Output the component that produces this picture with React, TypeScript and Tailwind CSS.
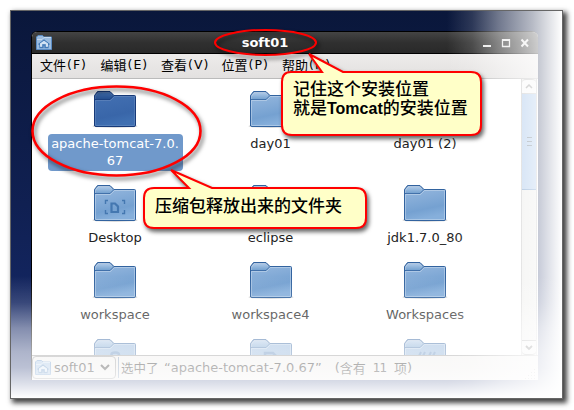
import React from "react";

type Emblem = "none" | "desktop" | "home" | "page" | "quote";

function Folder({ selected = false, emblem = "none" }: { selected?: boolean; emblem?: Emblem }) {
  const id = selected ? "dark" : "light";
  const edge = selected ? "#173a79" : "#32639f";
  return (
    <svg width="46" height="38" viewBox="0 0 46 38" className="block shrink-0">
      <defs>
        <linearGradient id={`body-${id}`} x1="0" y1="0" x2="0.25" y2="1">
          <stop offset="0" stopColor={selected ? "#4572b4" : "#9bbbe0"} />
          <stop offset="0.75" stopColor={selected ? "#3966a9" : "#75a1d1"} />
          <stop offset="1" stopColor={selected ? "#4070b2" : "#86afdb"} />
        </linearGradient>
        <linearGradient id={`tab-${id}`} x1="0" y1="0" x2="0" y2="1">
          <stop offset="0" stopColor={selected ? "#416ca9" : "#b4cdea"} />
          <stop offset="1" stopColor={selected ? "#234c8c" : "#719fce"} />
        </linearGradient>
      </defs>
      <ellipse cx="23" cy="35.2" rx="22.5" ry="1.6" fill="#000" opacity="0.2" />
      <path d="M2.5 35V4.5L5.5 .5H18L22 4.5H42.5Q43.5 4.5 43.5 5.5V34Q43.5 35.5 42 35.5H4Q2.5 35.5 2.5 34Z" fill={`url(#body-${id})`} stroke={edge} />
      <path d="M3 8.5V4.5L6 1H17.5L21.5 5L18 8.5Z" fill={`url(#tab-${id})`} stroke={edge} strokeWidth=".8" />
      <path d="M3.5 34.5V9.5H18.5L22.5 5.5H42.5V34.5Z" fill="none" stroke="#fff" opacity={selected ? 0.12 : 0.3} />
      <path d="M3.5 8V5L6 1.5H17.5L20.5 4.5" fill="none" stroke="#fff" opacity={selected ? 0.15 : 0.4} />
      {emblem === "desktop" && (
        <g fill="none" stroke="#4477b0" strokeWidth="1.8">
          <path d="M19.5 18.5H23L26 21.5V27H19.5Z" strokeWidth="2.2" />
          <path d="M13.5 19V15.5H16M30 15.5H32.5V19M13.5 25V28.5H16M30 28.5H32.5V25" strokeWidth="1.4" />
        </g>
      )}
      {emblem === "home" && <path d="M19.5 18V15.5Q19.5 13.5 23.5 13.5Q27 13.5 27 16" fill="none" stroke="#4c7cb5" strokeWidth="2.5" />}
      {emblem === "page" && <path d="M17 18V14H25L28 17V18" fill="none" stroke="#4c7cb5" strokeWidth="2.5" />}
      {emblem === "quote" && <path d="M19 13L17 17M23 13L21 17M29 13L27 17M33 13L31 17" fill="none" stroke="#4c7cb5" strokeWidth="2" />}
    </svg>
  );
}

function HomeFolder() {
  return (
    <svg width="16" height="15" viewBox="0 0 16 15" className="block shrink-0">
      <path d="M.5 14V2L2 .5H6.5L8 2H15.5V14.5H.5Z" fill="#9bbce0" stroke="#5b8cc4" />
      <path d="M1 4.5H6L8 2.5H15" fill="none" stroke="#c4d9ef" />
      <path d="M2.5 9.5L8 5L13.5 9.5M4 9V12.5H7V10H9V12.5H12V9" fill="none" stroke="#457bb7" strokeWidth="1.3" />
      <path d="M4 8.5L8 5.7L12 8.5V11.8H10V9H6V11.8H4Z" fill="#d2e2f3" />
    </svg>
  );
}

function Item({ name, emblem }: { name: string; emblem?: Emblem }) {
  return (
    <div className="flex flex-col items-center">
      <Folder emblem={emblem} />
      <span className="mt-[6px] whitespace-nowrap text-[13px] leading-[17px] text-[#222]">{name}</span>
    </div>
  );
}

function ClippedFolder({ emblem }: { emblem: Emblem }) {
  return (
    <div className="flex justify-center">
      <Folder emblem={emblem} />
    </div>
  );
}

const menus = [["文件", "F"], ["编辑", "E"], ["查看", "V"], ["位置", "P"], ["帮助", "H"]];

export default function App() {
  return (
    <div className="relative h-[410px] w-[574px] overflow-hidden bg-white pl-[10px] pt-[10px] font-['DejaVu_Sans','Noto_Sans_CJK_SC',sans-serif]">
      <div className="relative h-[389px] w-[553px] border border-[#666] bg-gradient-to-b from-[#0a173b] via-[#102052] to-[#162b70] pl-[20px] pt-[20px] shadow-[3px_3px_5px_1px_#444]">
        <div className="flex h-[349px] w-[507px] flex-col overflow-hidden rounded-t-[6px] border-l border-t border-black bg-white">
          <header className="flex h-[22px] shrink-0 items-center justify-between border-b border-black bg-gradient-to-b from-[#444] via-[#303030] to-[#292929] pl-[4px] pr-[8px]">
            <HomeFolder />
            <span className="-ml-[4px] text-[13px] font-bold leading-[18px] text-white">soft01</span>
            <svg width="48" height="10" viewBox="0 0 48 10" fill="none" stroke="#e8e8e8">
              <path d="M1 8H9" strokeWidth="2" />
              <path d="M20.5 2H27.5V8.5H20.5Z" strokeWidth="1.3" />
              <path d="M20 2H28" strokeWidth="2" />
              <path d="M39.5 1.5L46 8.5M46 1.5L39.5 8.5" strokeWidth="2" />
            </svg>
          </header>
          <nav className="flex h-[25px] shrink-0 items-center gap-[13px] border-b border-[#bbb] bg-gradient-to-b from-[#edebea] to-[#e3e1e0] pb-[2px] pl-[8px] text-black">
            {menus.map(([name, key]) => (
              <span key={key} className="flex w-[47.5px] items-center whitespace-nowrap font-['Noto_Sans_CJK_SC',sans-serif] text-[13px] leading-[18px]">
                {name}
                <span className="ml-px font-['DejaVu_Sans',sans-serif] text-[12.5px] tracking-[1px]">({key})</span>
              </span>
            ))}
          </nav>
          <div className="flex h-[276px] shrink-0">
            <main className="grid h-[276px] w-[489px] shrink-0 grid-cols-[156px_155px_154px] grid-rows-[94px_77px_77px_40px] overflow-hidden pl-[5px] pt-[12px]">
              <div className="flex flex-col items-center">
                <Folder selected />
                <span className="mt-[5px] h-[37px] w-[135px] rounded-[4px] bg-[#7099cb] pt-px text-center text-[13px] leading-[17px] text-white">apache-tomcat-7.0.<br />67</span>
              </div>
              <Item name="day01" />
              <Item name="day01 (2)" />
              <Item name="Desktop" emblem="desktop" />
              <Item name="eclipse" />
              <Item name="jdk1.7.0_80" />
              <Item name="workspace" />
              <Item name="workspace4" />
              <Item name="Workspaces" />
              <ClippedFolder emblem="home" />
              <ClippedFolder emblem="page" />
              <ClippedFolder emblem="quote" />
            </main>
            <aside className="flex w-[16px] flex-col border-x border-[#bbb] bg-[#e8e8e5]">
              <div className="flex h-[15px] items-center justify-center rounded-t border-y border-[#bbb] bg-[#f6f6f6]">
                <svg width="8" height="5" viewBox="0 0 8 5"><path d="M1 4L4 1L7 4" fill="none" stroke="#888" strokeWidth="1.5" /></svg>
              </div>
              <div className="flex h-[96px] flex-col items-center justify-center gap-[3px] border-b border-[#5585be] bg-[#9dbfe8]">
                <i className="h-px w-[5px] bg-[#567]" /><i className="h-px w-[5px] bg-[#567]" /><i className="h-px w-[5px] bg-[#567]" />
              </div>
              <div className="mt-auto flex h-[15px] items-center justify-center rounded-b border-y border-[#777] bg-[#eee]">
                <svg width="8" height="5" viewBox="0 0 8 5"><path d="M1 1L4 4L7 1" fill="none" stroke="#000" strokeWidth="1.8" /></svg>
              </div>
            </aside>
          </div>
          <footer className="flex flex-1 items-center border-b border-t border-[#888] bg-[#edebe9] pb-px text-[13px] leading-[18px] text-black">
            <div className="flex h-[23px] w-[84px] shrink-0 items-center rounded-[4px] border border-[#888] pl-[2px]">
              <HomeFolder />
              <span className="ml-[3px] w-[42px] shrink-0">soft01</span>
              <svg width="10" height="7" viewBox="0 0 10 7" className="ml-[4px]"><path d="M1 1L5 5L9 1" fill="none" stroke="#111" strokeWidth="2" /></svg>
            </div>
            <i className="ml-[2px] h-[21px] w-px bg-[#6885aa]" />
            <span className="ml-[2px] w-[38px] font-['Noto_Sans_CJK_SC',sans-serif] text-[12.5px]">选中了</span>
            <span className="ml-[5px] whitespace-nowrap">“apache-tomcat-7.0.67”</span>
            <span className="ml-[13px] flex whitespace-nowrap font-['Noto_Sans_CJK_SC',sans-serif] text-[13px]">
              <span className="font-['DejaVu_Sans']">(</span>含有
              <span className="ml-[7px] mr-[8px] font-['DejaVu_Sans'] text-[12px] tracking-[-1px]">11</span>项
              <span className="font-['DejaVu_Sans']">)</span>
            </span>
            <svg width="11" height="11" viewBox="0 0 11 11" className="ml-auto mr-[2px] self-end" fill="#777">
              <path d="M9 1h1v1H9zM6 4h1v1H6zM9 4h1v1H9zM3 7h1v1H3zM6 7h1v1H6zM9 7h1v1H9zM0 10h1v1H0zM3 10h1v1H3zM6 10h1v1H6zM9 10h1v1H9z" />
            </svg>
          </footer>
        </div>
        <div className="pointer-events-none absolute inset-y-0 right-0 w-[115px] bg-[linear-gradient(to_right,transparent_0%,rgba(255,255,255,.14)_22%,rgba(255,255,255,.42)_45%,rgba(255,255,255,.7)_74%,white_100%)]" />
        <div className="pointer-events-none absolute inset-x-0 bottom-0 h-[122px] bg-[linear-gradient(to_bottom,transparent_0%,rgba(255,255,255,.16)_22%,rgba(255,255,255,.48)_43%,rgba(255,255,255,.65)_62%,rgba(255,255,255,.71)_75%,rgba(255,255,255,.85)_88%,white_100%)]" />
      </div>
      <svg className="absolute inset-0" width="574" height="410" viewBox="0 0 574 410">
        <g className="[filter:drop-shadow(2px_3px_2px_rgba(0,0,0,.6))]" stroke="#f00" strokeWidth="2" fill="none">
          <ellipse cx="265.5" cy="42.5" rx="50.5" ry="12.5" />
          <ellipse cx="116.5" cy="131" rx="84" ry="44.5" strokeWidth="2.6" />
          <path d="M291 72H322L309 54L343 72H471Q481 72 481 82V125Q481 135 471 135H292Q282 135 282 125V82Q282 72 291 72Z" fill="#ffffc8" />
          <path d="M154 188H189L171 170L212 188H356Q366 188 366 198V218Q366 228 356 228H154Q144 228 144 218V198Q144 188 154 188Z" fill="#ffffc8" />
        </g>
      </svg>
      <div className="absolute left-[293px] top-[80px] whitespace-nowrap font-['Liberation_Sans','Noto_Sans_CJK_SC',sans-serif] text-[17px] font-medium leading-[19px] text-black">
        <p>记住这个安装位置</p>
        <p>就是<span className="text-[16px] font-bold">Tomcat</span>的安装位置</p>
      </div>
      <p className="absolute left-[155px] top-[195px] whitespace-nowrap font-['Noto_Sans_CJK_SC',sans-serif] text-[17px] font-medium leading-[20px] text-black">压缩包释放出来的文件夹</p>
    </div>
  );
}
